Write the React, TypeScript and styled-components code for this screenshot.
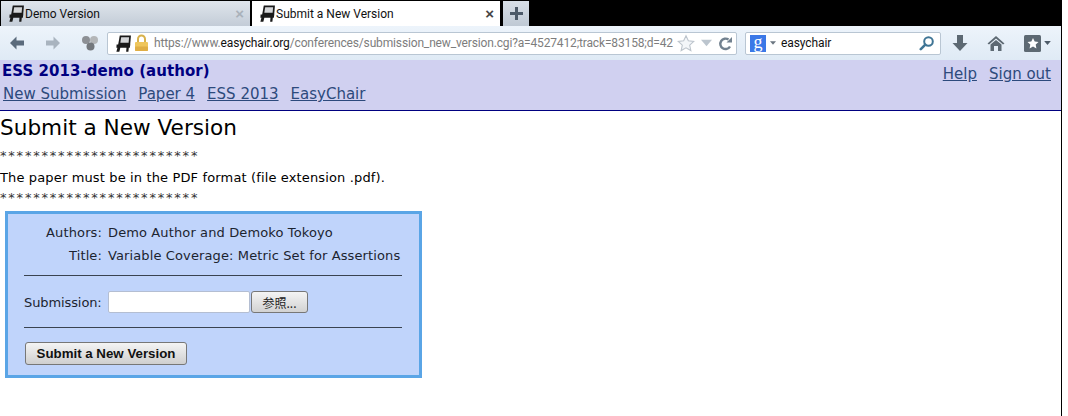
import * as React from "react"
import styled, { createGlobalStyle } from "styled-components"

const GlobalStyle = createGlobalStyle`
  html, body {
    margin: 0;
    padding: 0;
    background: #fff;
  }
`

const ChairIcon = ({ size = 17 }: { size?: number }) => (
  <svg width={size} height={size} viewBox="0 0 16 16">
    <path d="M4.500 .5H15l-.8 9.500H2.800z" fill="#1a1a1a" />
    <path d="M5.800 2.200h7.500l-.5 5H5z" fill="#d4d6d8" />
    <path d="M1.500 9h12.800l-.3 3h-1l-.4 3.800h-2.100l.3-3.800H5l-.9 3.800H1.300l1-3.800h-1z" fill="#1a1a1a" />
  </svg>
)

const LockIcon = () => (
  <svg width="15" height="18" viewBox="0 0 15 18">
    <path d="M4 8V5a3.500 3.500 0 0 1 7 0v3" fill="none" stroke="#d8b24c" strokeWidth="2" />
    <rect x="1" y="8" width="13" height="9" rx="1" fill="#efc65c" />
    <rect x="1" y="12.500" width="13" height="4.500" rx="1" fill="#dfae45" />
  </svg>
)

const BackIcon = ({ color }: { color: string }) => (
  <svg width="16" height="14" viewBox="0 0 16 14">
    <path d="M1 7l6.500-6.500V4.500H15v5H7.500v4z" fill={color} />
  </svg>
)

const ForwardIcon = ({ color }: { color: string }) => (
  <svg width="16" height="14" viewBox="0 0 16 14">
    <path d="M15 7L8.500.5V4.500H1v5h7.500v4z" fill={color} />
  </svg>
)

const SyncIcon = () => (
  <svg width="18" height="16" viewBox="0 0 18 16">
    <circle cx="5" cy="5" r="4" fill="#8d9095" />
    <circle cx="13" cy="5" r="4" fill="#b4b6b8" />
    <circle cx="9.500" cy="11.500" r="4" fill="#74787d" />
  </svg>
)

const StarOutline = () => (
  <svg width="18" height="18" viewBox="0 0 20 19">
    <path
      d="M10 1.500l2.600 5.600 6 .7-4.500 4.100 1.300 6-5.400-3.100-5.400 3.100 1.300-6L1.400 7.800l6-.7z"
      fill="#f3f6f9"
      stroke="#bcc4cc"
      strokeWidth="1.200"
    />
  </svg>
)

const Triangle = ({ color, w, h }: { color: string; w: number; h: number }) => (
  <svg width={w} height={h} viewBox="0 0 10 6">
    <path d="M0 0h10L5 6z" fill={color} />
  </svg>
)

const ReloadIcon = () => (
  <svg width="15" height="15" viewBox="0 0 15 15">
    <path d="M12 10.500A5.200 5.200 0 1 1 10.500 3.600" fill="none" stroke="#72818f" strokeWidth="2.400" />
    <path d="M8.500 6.500H14V1z" fill="#72818f" />
  </svg>
)

const SearchIcon = () => (
  <svg width="16" height="16" viewBox="0 0 16 16">
    <circle cx="9.500" cy="6.500" r="4.300" fill="none" stroke="#3f7595" strokeWidth="2" />
    <path d="M6.300 9.700L1.800 14.200" stroke="#3f7595" strokeWidth="2.600" strokeLinecap="round" />
  </svg>
)

const DownloadIcon = () => (
  <svg width="16" height="18" viewBox="0 0 16 18">
    <path d="M5 1h6v8h4.500L8 17 .5 9H5z" fill="#5d6973" />
  </svg>
)

const HomeIcon = () => (
  <svg width="18" height="17" viewBox="0 0 18 17">
    <path d="M9 1L.5 8.500 2 9.500 9 3.500l7 6 1.500-1z" fill="#5d6973" />
    <path d="M3.500 9.500L9 5l5.500 4.500V16h-3.500v-5H7v5H3.500z" fill="#5d6973" />
  </svg>
)

const BookmarkIcon = () => (
  <svg width="17" height="17" viewBox="0 0 17 17">
    <rect width="17" height="17" rx="1.500" fill="#5d6973" />
    <path
      d="M9 3l1.700 3.500 3.800.5-2.800 2.600.7 3.800L9 11.600l-3.400 1.800.7-3.800L3.500 7l3.800-.5z"
      fill="#fff"
    />
  </svg>
)

const PlusIcon = () => (
  <svg width="13" height="13" viewBox="0 0 13 13">
    <path d="M5 0h3v5h5v3H8v5H5V8H0V5h5z" fill="#4c5a68" />
  </svg>
)

const App = () => (
  <Page>
    <GlobalStyle />
    <Browser>
      <TabStrip>
        <Tab>
          <ChairIcon />
          <TabLabel>Demo Version</TabLabel>
          <TabClose>×</TabClose>
        </Tab>
        <Tab $active>
          <ChairIcon />
          <TabLabel>Submit a New Version</TabLabel>
          <TabClose $active>×</TabClose>
        </Tab>
        <NewTab>
          <PlusIcon />
        </NewTab>
      </TabStrip>

      <Toolbar>
        <NavIcons>
          <BackIcon color="#5b6b7c" />
          <ForwardIcon color="#a9b4bf" />
          <SyncIcon />
        </NavIcons>
        <UrlBar>
          <ChairIcon />
          <LockIcon />
          <UrlText>
            https://www.<strong>easychair.org</strong>
            /conferences/submission_new_version.cgi?a=4527412;track=83158;d=42
          </UrlText>
          <UrlActions>
            <StarOutline />
            <Triangle color="#bcc5ce" w={11} h={8} />
            <ReloadIcon />
          </UrlActions>
        </UrlBar>
        <SearchBar>
          <EngineBadge>g</EngineBadge>
          <Triangle color="#6b7680" w={6} h={4} />
          <SearchText>easychair</SearchText>
          <SearchIcon />
        </SearchBar>
        <ToolIcons>
          <DownloadIcon />
          <HomeIcon />
          <BookmarkGroup>
            <BookmarkIcon />
            <Triangle color="#4c5a68" w={7} h={4} />
          </BookmarkGroup>
        </ToolIcons>
      </Toolbar>

      <Menu>
        <div>
          <MenuTitle>ESS 2013-demo (author)</MenuTitle>
          <MenuLinks>
            <MenuLink href="#">New Submission</MenuLink>
            <MenuLink href="#">Paper 4</MenuLink>
            <MenuLink href="#">ESS 2013</MenuLink>
            <MenuLink href="#">EasyChair</MenuLink>
          </MenuLinks>
        </div>
        <SideLinks>
          <MenuLink href="#">Help</MenuLink>
          <MenuLink href="#">Sign out</MenuLink>
        </SideLinks>
      </Menu>

      <Content>
        <Heading>Submit a New Version</Heading>
        <Stars $top={8}>************************</Stars>
        <Notice>The paper must be in the PDF format (file extension .pdf).</Notice>
        <Stars $top={4}>************************</Stars>

        <FormBox>
          <InfoRow>
            <InfoLabel>Authors:</InfoLabel>
            <span>Demo Author and Demoko Tokoyo</span>
          </InfoRow>
          <InfoRow>
            <InfoLabel>Title:</InfoLabel>
            <span>Variable Coverage: Metric Set for Assertions</span>
          </InfoRow>
          <Rule />
          <FileRow>
            <FileLabel>Submission:</FileLabel>
            <FileInput type="text" />
            <BrowseButton type="button">参照...</BrowseButton>
          </FileRow>
          <Rule />
          <SubmitButton type="button">Submit a New Version</SubmitButton>
        </FormBox>
      </Content>
    </Browser>
  </Page>
)

export default App

// Styles
const Page = styled.div`
  width: 1068px;
  height: 416px;
  overflow: hidden;
  background: #fff;
`

const Browser = styled.div`
  width: 1061px;
  height: 416px;
  border-right: 1px solid #000;
  background: #fff;

  svg {
    flex: none;
  }
`

const TabStrip = styled.div`
  display: flex;
  align-items: flex-end;
  height: 26px;
  background: #000;
  padding-left: 1px;
  box-sizing: border-box;
`

const Tab = styled.div<{ $active?: boolean }>`
  display: flex;
  align-items: center;
  box-sizing: border-box;
  width: ${(p) => (p.$active ? "248px" : "249px")};
  margin-right: ${(p) => (p.$active ? "3px" : "2px")};
  height: 25px;
  padding: 0 6px 0 7px;
  background: ${(p) =>
    p.$active ? "#fff" : "linear-gradient(#dfe5ec, #c3ccd7)"};
  font: 12px Roboto, "Open Sans", sans-serif;
  color: #111;
`

const TabLabel = styled.span`
  flex: 1;
  white-space: nowrap;
`

const TabClose = styled.span<{ $active?: boolean }>`
  font: bold 15px "Liberation Sans", sans-serif;
  color: ${(p) => (p.$active ? "#444" : "#a9b1ba")};
`

const NewTab = styled.div`
  display: flex;
  align-items: center;
  justify-content: center;
  width: 26px;
  height: 25px;
  background: linear-gradient(#d8dfe7, #bfc9d4);
`

const Toolbar = styled.div`
  display: flex;
  align-items: center;
  box-sizing: border-box;
  height: 34px;
  padding: 0 12px 0 9px;
  background: linear-gradient(#edf4fb, #dfeaf5);
`

const NavIcons = styled.div`
  display: flex;
  align-items: center;
  gap: 20px;
  width: 98px;
  flex: none;
`

const UrlBar = styled.div`
  display: flex;
  align-items: center;
  box-sizing: border-box;
  width: 630px;
  height: 23px;
  flex: none;
  gap: 2px;
  padding: 0 3px 0 7px;
  background: #fff;
  border: 1px solid #b9c6d3;
  border-radius: 2px;
`

const UrlText = styled.span`
  flex: 1;
  min-width: 0;
  margin-left: 3px;
  font: 12px Roboto, "Open Sans", sans-serif;
  letter-spacing: -0.15px;
  color: #7d7d7d;
  white-space: nowrap;

  strong {
    font-weight: 400;
    color: #111;
  }
`

const UrlActions = styled.div`
  display: flex;
  align-items: center;
  gap: 6px;
`

const SearchBar = styled.div`
  display: flex;
  align-items: center;
  box-sizing: border-box;
  width: 196px;
  height: 23px;
  margin-left: 8px;
  flex: none;
  padding: 0 5px 0 4px;
  background: #fff;
  border: 1px solid #b9c6d3;
  border-radius: 2px;
`

const EngineBadge = styled.span`
  display: flex;
  align-items: center;
  justify-content: center;
  width: 16px;
  height: 17px;
  margin-right: 4px;
  padding-bottom: 3px;
  box-sizing: border-box;
  background: #3b78e7;
  color: #fff;
  font: 18px/14px "Liberation Serif", serif;
`

const SearchText = styled.span`
  flex: 1;
  margin-left: 5px;
  font: 12px Roboto, "Open Sans", sans-serif;
  letter-spacing: -0.1px;
  color: #111;
`

const ToolIcons = styled.div`
  display: flex;
  align-items: center;
  gap: 19px;
  margin-left: 11px;
`

const BookmarkGroup = styled.div`
  display: flex;
  align-items: center;
  gap: 3px;
`

const Menu = styled.div`
  display: flex;
  justify-content: space-between;
  box-sizing: border-box;
  height: 51px;
  padding: 2px 10px 0 2px;
  background: #d0d0f0;
  border-bottom: 1px solid #000080;
  font-family: "DejaVu Sans", Verdana, sans-serif;
`

const MenuTitle = styled.div`
  font-size: 15px;
  line-height: 19px;
  font-weight: 700;
  letter-spacing: 0.05px;
  color: #000080;
`

const MenuLinks = styled.div`
  display: flex;
  gap: 12px;
  padding: 3px 0 0 1px;
`

const SideLinks = styled.div`
  display: flex;
  gap: 12px;
  padding-top: 2px;
`

const MenuLink = styled.a`
  font-size: 15px;
  line-height: 20px;
  color: #2d4a7c;
  text-decoration: underline;
`

const Content = styled.div`
  font-family: "DejaVu Sans", Verdana, sans-serif;
  color: #000;
`

const Heading = styled.h1`
  margin: 0;
  padding-top: 5px;
  font-size: 21.6px;
  line-height: 24px;
  font-weight: 400;
`

const Stars = styled.div<{ $top: number }>`
  font-size: 13px;
  line-height: 16px;
  letter-spacing: 1.8px;
  margin-top: ${(p) => p.$top}px;
  color: #333;
`

const Notice = styled.div`
  font-size: 13px;
  line-height: 16px;
  letter-spacing: 0.14px;
  margin-top: 6px;
`

const FormBox = styled.div`
  box-sizing: border-box;
  width: 417px;
  height: 167px;
  margin: 5px 0 0 5px;
  padding: 7px 16px 0;
  background: #c0d4fb;
  border: 3px solid #5aa5e6;
  font-size: 13px;
  letter-spacing: 0.12px;
  color: #1c2430;
`

const InfoRow = styled.div`
  display: flex;
  gap: 6px;
  line-height: 23px;
  white-space: nowrap;
`

const InfoLabel = styled.span`
  width: 78px;
  text-align: right;
  flex: none;
`

const Rule = styled.hr`
  margin: 8px 0 0;
  width: 378px;
  border: none;
  border-top: 1px solid #3a4350;
`

const FileRow = styled.div`
  display: flex;
  align-items: center;
  box-sizing: border-box;
  height: 43px;
  padding-top: 15px;
  padding-bottom: 6px;
`

const FileLabel = styled.span`
  width: 84px;
  flex: none;
  letter-spacing: -0.1px;
`

const FileInput = styled.input`
  box-sizing: border-box;
  width: 142px;
  height: 22px;
  padding: 0;
  background: #fff;
  border: 1px solid #b4bed2;
  border-radius: 2px;
`

const BrowseButton = styled.button`
  box-sizing: border-box;
  width: 57px;
  height: 22px;
  margin-left: 1px;
  padding: 0;
  background: linear-gradient(#f4f4f4, #d2d2d2);
  border: 1px solid #777;
  border-radius: 3px;
  font: 12px "Noto Sans CJK JP", sans-serif;
  color: #222;
`

const SubmitButton = styled.button`
  box-sizing: border-box;
  display: block;
  width: 162px;
  height: 23px;
  margin: 14px 0 0 1px;
  padding: 0;
  background: linear-gradient(#f4f4f4, #cfcfcf);
  border: 1px solid #777;
  border-radius: 3px;
  font: bold 13.3px "Liberation Sans", Arial, sans-serif;
  color: #111;
`
